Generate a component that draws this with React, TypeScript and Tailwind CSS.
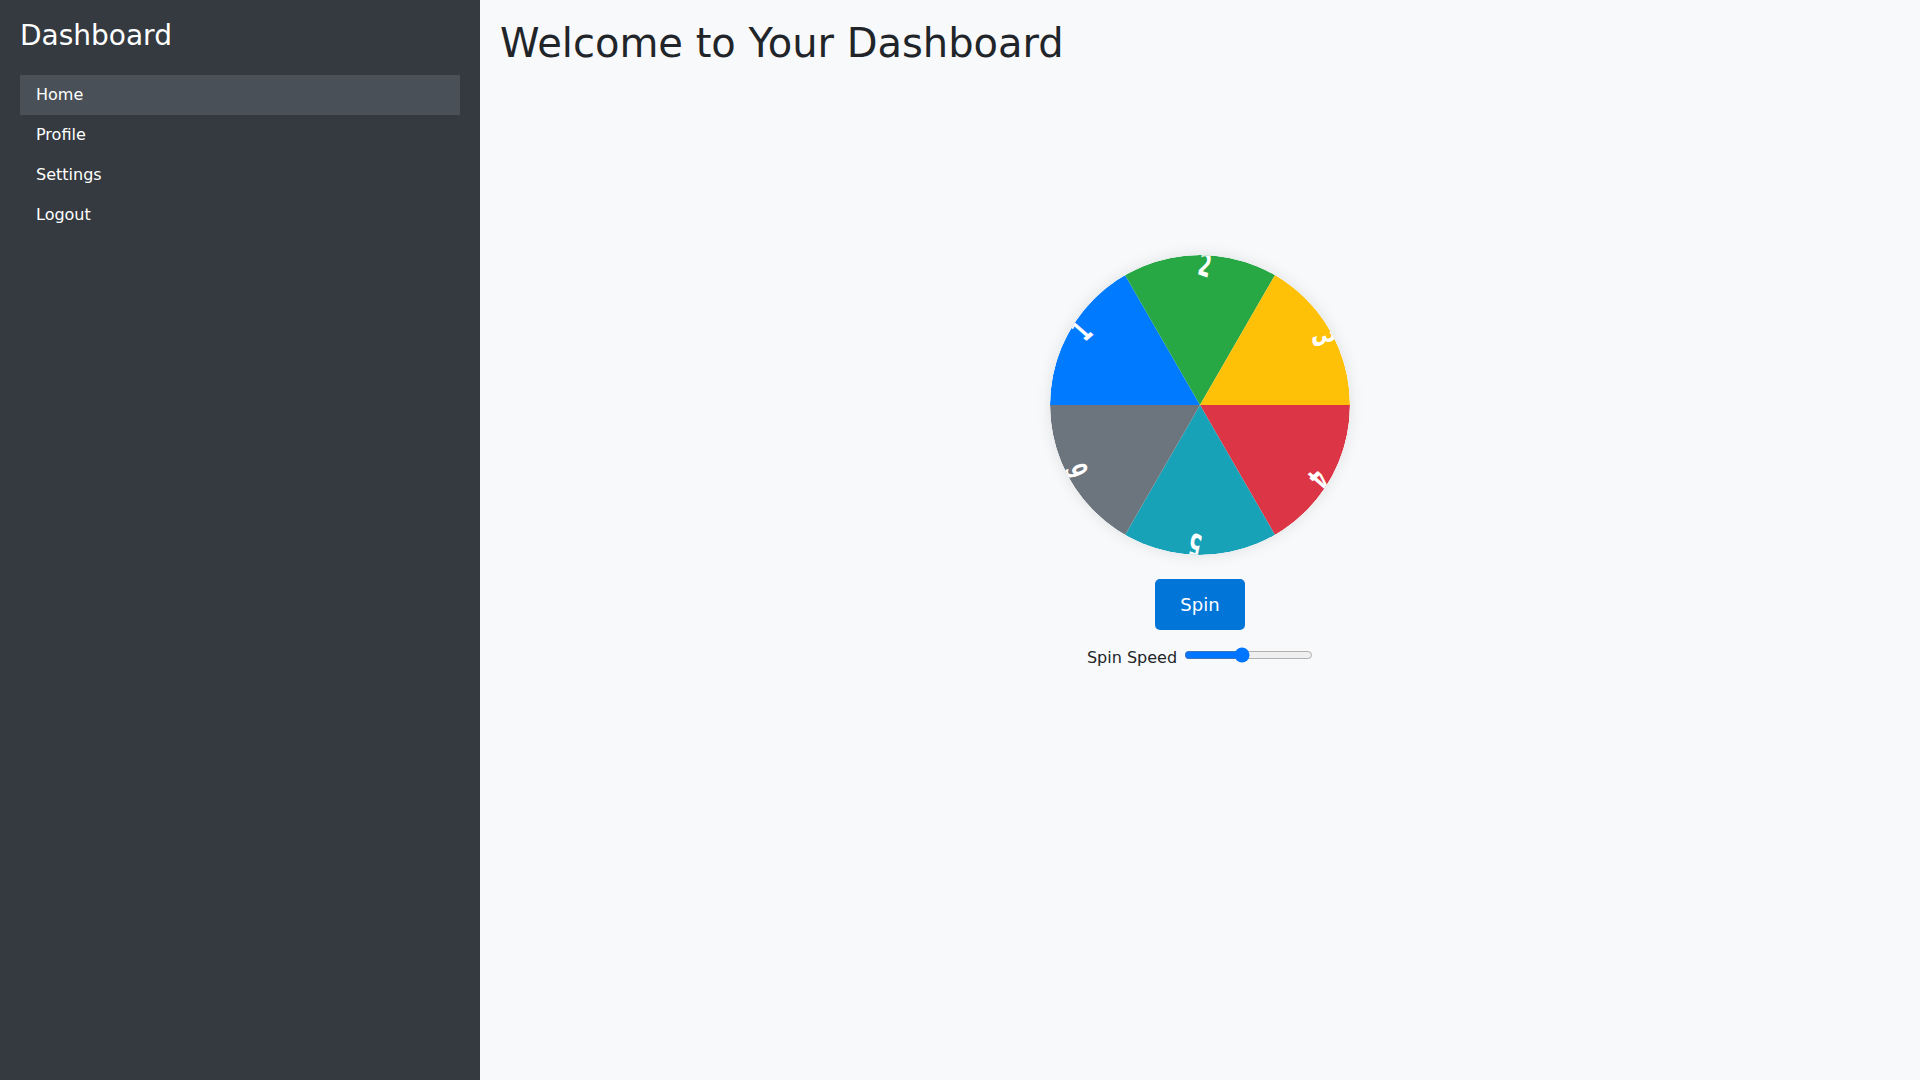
import { useState } from "react";

const NAV = ["Home", "Profile", "Settings", "Logout"];

const SEGMENTS = [
  { label: "1", color: "#007bff", start: 270 },
  { label: "2", color: "#28a745", start: 330 },
  { label: "3", color: "#ffc107", start: 30 },
  { label: "4", color: "#dc3545", start: 90 },
  { label: "5", color: "#17a2b8", start: 150 },
  { label: "6", color: "#6c757d", start: 210 },
];

const R = 150;

function point(deg: number) {
  const rad = (deg * Math.PI) / 180;
  return `${R + R * Math.sin(rad)} ${R - R * Math.cos(rad)}`;
}

function labelPos(deg: number, dist: number) {
  const rad = (deg * Math.PI) / 180;
  return [R + dist * Math.sin(rad), R - dist * Math.cos(rad)];
}

function Wheel({ rotation }: { rotation: number }) {
  return (
    <div className="h-[300px] w-[300px] overflow-hidden rounded-full shadow-[0_0_15px_rgba(0,0,0,0.1)]">
      <svg
        width="300"
        height="300"
        viewBox="0 0 300 300"
        className="block"
        style={{ transform: `rotate(${rotation}deg)` }}
      >
        <defs>
          <clipPath id="wheel-clip">
            <circle cx="150" cy="150" r="150" />
          </clipPath>
        </defs>
        <g clipPath="url(#wheel-clip)">
          {SEGMENTS.map((s) => (
            <path
              key={s.label}
              d={`M150 150 L${point(s.start)} A150 150 0 0 1 ${point(s.start + 60)} Z`}
              fill={s.color}
            />
          ))}
          {SEGMENTS.map((s) => {
            const [x, y] = labelPos(s.start + 32, 140);
            return (
              <text
                key={`t${s.label}`}
                x="0"
                y="0"
                fill="#ffffff"
                fontSize="24"
                fontWeight="bold"
                fontFamily="DejaVu Sans, sans-serif"
                textAnchor="middle"
                dominantBaseline="central"
                transform={`translate(${x} ${y}) rotate(${s.start}) skewY(-30) rotate(60)`}
              >
                {s.label}
              </text>
            );
          })}
        </g>
      </svg>
    </div>
  );
}

export default function App() {
  const [active, setActive] = useState("Home");
  const [speed, setSpeed] = useState(5);
  const [rotation, setRotation] = useState(0);

  return (
    <div className="flex min-h-screen font-['DejaVu_Sans',sans-serif]">
      <aside className="w-[480px] shrink-0 bg-[#343a40] px-5 pt-[19px] text-white">
        <h2 className="text-[28px] leading-[1.2] font-normal">Dashboard</h2>
        <nav className="mt-[22px] flex flex-col">
          {NAV.map((item) => (
            <a
              key={item}
              href="#"
              onClick={(e) => {
                e.preventDefault();
                setActive(item);
              }}
              className={`block px-4 py-2 text-base leading-6 text-white ${
                active === item ? "bg-[#495057]" : ""
              }`}
            >
              {item}
            </a>
          ))}
        </nav>
      </aside>

      <main className="flex-1 bg-[#f8f9fa] px-5 pt-[19px] pb-5">
        <h1 className="text-[40px] leading-[1.2] font-normal text-[#212529]">
          Welcome to Your Dashboard
        </h1>
        <div className="mt-[188px] flex flex-col items-center">
          <Wheel rotation={rotation} />
          <button
            type="button"
            onClick={() => setRotation((r) => r + 360 * speed + Math.floor(Math.random() * 360))}
            className="mt-[24px] rounded-[5px] bg-[#0275d8] px-[25px] py-[15px] text-[18px] leading-[21px] text-white"
          >
            Spin
          </button>
          <label className="mt-[16px] text-base leading-6 text-[#212529]">
            Spin Speed
            <input
              type="range"
              min={1}
              max={10}
              value={speed}
              onChange={(e) => setSpeed(Number(e.target.value))}
              className="ml-[7px] w-[129px] align-baseline"
            />
          </label>
        </div>
      </main>
    </div>
  );
}
